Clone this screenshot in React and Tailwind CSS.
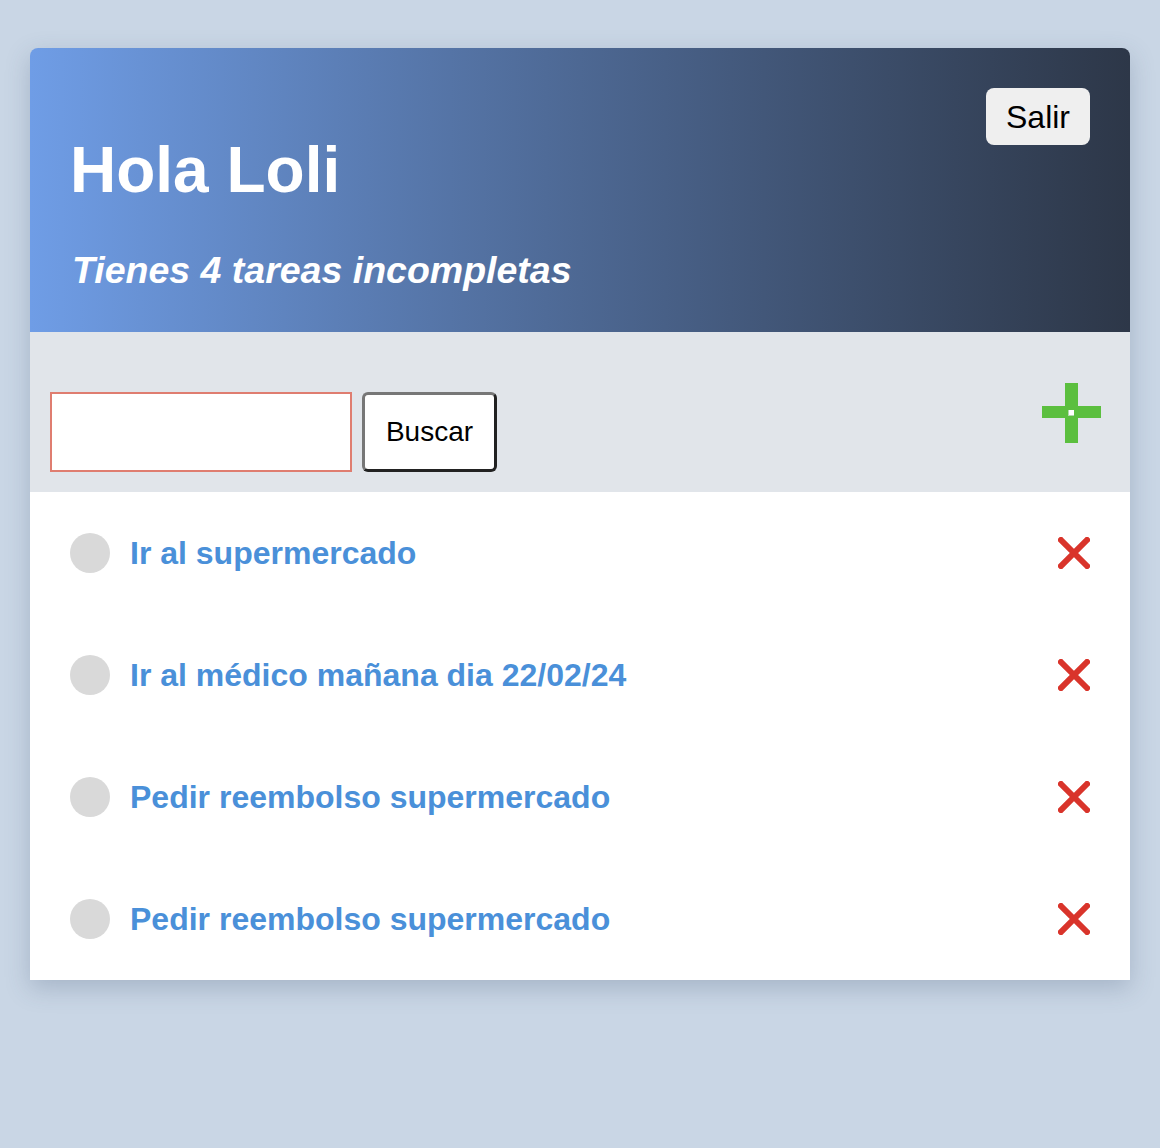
import React from 'react';

const tasks = [
  'Ir al supermercado',
  'Ir al médico mañana dia 22/02/24',
  'Pedir reembolso supermercado',
  'Pedir reembolso supermercado',
];

// Green plus drawn as four arms around a tiny white centre
const PlusIcon = () => (
  <svg width="60" height="60" viewBox="0 0 60 60" aria-hidden="true">
    <rect x="24" y="0" width="13" height="27" fill="#5bbf3f" />
    <rect x="24" y="33" width="13" height="27" fill="#5bbf3f" />
    <rect x="1" y="23" width="26" height="12" fill="#5bbf3f" />
    <rect x="33" y="23" width="27" height="12" fill="#5bbf3f" />
    <rect x="27" y="26" width="7" height="7" fill="#5bbf3f" opacity="0.35" />
    <rect x="28" y="27" width="5" height="5" fill="#ffffff" />
  </svg>
);

const CrossIcon = () => (
  <svg width="32" height="32" viewBox="0 0 32 32" aria-hidden="true">
    <path d="M3 3 L29 29 M29 3 L3 29" stroke="#d9342b" strokeWidth="6" strokeLinecap="square" />
  </svg>
);

const TaskRow = ({ text }) => (
  <li className="h-[122px] px-10 flex items-center">
    <span className="w-10 h-10 rounded-full bg-[#d9d9d9] shrink-0"></span>
    <span className="ml-5 text-[32px] font-bold text-[#4a90d9] leading-none">{text}</span>
    <button className="ml-auto">
      <CrossIcon />
    </button>
  </li>
);

export default function App() {
  return (
    <div className="min-h-[1148px] bg-[#c9d6e5] pt-12 px-[30px]" style={{ fontFamily: '"Liberation Sans", Arial, sans-serif' }}>
      <div className="w-[1100px] rounded-t-lg overflow-hidden shadow-[0_8px_24px_rgba(60,80,110,0.25)]">
        {/* Header */}
        <header className="bg-gradient-to-r from-[#6f9de6] to-[#2d3748] px-10 pt-10 pb-[43px] flex items-start justify-between h-[284px]">
          <div>
            <h1 className="mt-[50px] text-[64px] font-bold text-white leading-none">Hola Loli</h1>
            <p className="mt-[50px] ml-[2px] text-[37.5px] font-bold italic text-white leading-none">Tienes 4 tareas incompletas</p>
          </div>
          <button className="bg-[#efefef] rounded-lg px-5 h-[57px] text-[32px] text-black">Salir</button>
        </header>

        {/* Search bar */}
        <section className="bg-[#e1e5ea] h-40 pl-5 pr-[29px] flex items-start justify-between">
          <div className="flex gap-[10px] mt-[60px]">
            <input className="w-[302px] h-20 bg-white border-2 border-[#df7d70] outline-none" />
            <button className="w-[135px] h-20 bg-white rounded-md border-[3px] border-t-[#777] border-l-[#777] border-b-[#222] border-r-[#222] text-[28px] text-black">
              Buscar
            </button>
          </div>
          <button className="mt-[51px]">
            <PlusIcon />
          </button>
        </section>

        {/* Task list */}
        <ul className="bg-white">
          {tasks.map((t, i) => (
            <TaskRow key={i} text={t} />
          ))}
        </ul>
      </div>
    </div>
  );
}
